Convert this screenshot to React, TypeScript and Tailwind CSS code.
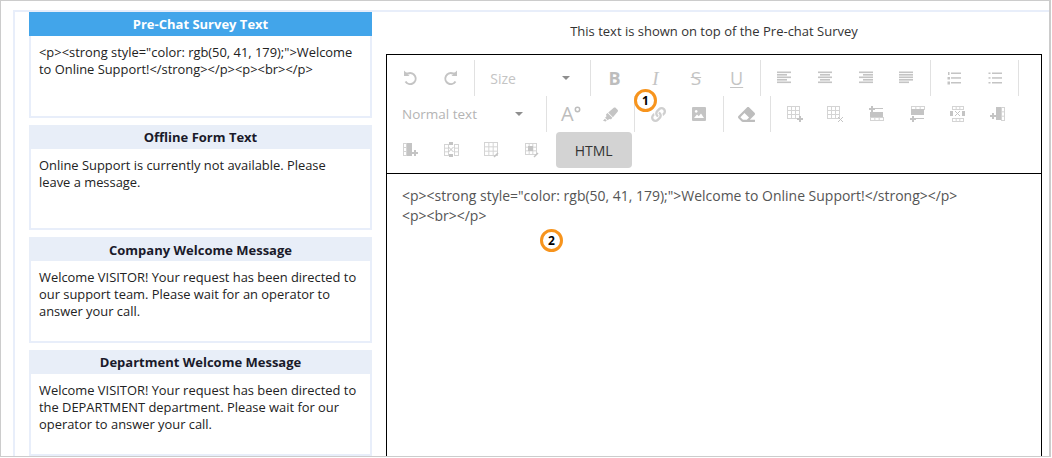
import { ReactNode } from 'react';
import { FaEraser, FaHighlighter, FaLink } from 'react-icons/fa';

const font = 'font-["Open_Sans","Liberation_Sans",sans-serif]';

function Ico({ children, w = 18, h = 18 }: { children: ReactNode; w?: number; h?: number }) {
  return (
    <svg width={w} height={h} viewBox={`0 0 ${w} ${h}`} fill="#c4c4c4">
      {children}
    </svg>
  );
}

function Bars({ rows }: { rows: [number, number][] }) {
  return (
    <Ico w={16} h={14}>
      {rows.map(([x, w], i) => (
        <rect key={i} x={x} y={i * 2.5 + 0.5} width={w} height={1.6} />
      ))}
    </Ico>
  );
}

function Grid({ x = 1, y = 1, w = 13, h = 13, cols = 3, rows = 3 }) {
  const lines = [];
  for (let i = 0; i <= cols; i++) lines.push(<rect key={'c' + i} fill="#d4d4d4" x={x + (i * w) / cols} y={y} width={1} height={h + 1} />);
  for (let i = 0; i <= rows; i++) lines.push(<rect key={'r' + i} fill="#d4d4d4" x={x} y={y + (i * h) / rows} width={w + 1} height={1} />);
  return <>{lines}</>;
}

const Plus = ({ x, y }: { x: number; y: number }) => (
  <path d={`M${x - 1} ${y - 3}h2v2h2v2h-2v2h-2v-2h-2v-2h2z`} />
);
const Cross = ({ x, y }: { x: number; y: number }) => (
  <path d={`M${x - 2.5} ${y - 2.5}l5 5M${x + 2.5} ${y - 2.5}l-5 5`} stroke="#c4c4c4" fill="none" />
);
const Pen = ({ x, y }: { x: number; y: number }) => (
  <path d={`M${x} ${y}l4-4`} stroke="#c4c4c4" strokeWidth="1.4" fill="none" />
);

const Btn = ({ children }: { children: ReactNode }) => (
  <div className="w-[40.67px] h-[36px] flex items-center justify-center shrink-0">{children}</div>
);
const Sep = () => <div className="mx-[3px] w-px h-[36px] bg-[#e1e1e1] shrink-0" />;
const Caret = () => <div className="w-0 h-0 border-x-[4px] border-x-transparent border-t-[4px] border-t-[#8e8e8e]" />;

const cards = [
  {
    title: 'Pre-Chat Survey Text',
    active: true,
    text: '<p><strong style="color: rgb(50, 41, 179);">Welcome to Online Support!</strong></p><p><br></p>',
  },
  { title: 'Offline Form Text', text: 'Online Support is currently not available. Please leave a message.' },
  {
    title: 'Company Welcome Message',
    text: 'Welcome VISITOR! Your request has been directed to our support team. Please wait for an operator to answer your call.',
  },
  {
    title: 'Department Welcome Message',
    text: 'Welcome VISITOR! Your request has been directed to the DEPARTMENT department. Please wait for our operator to answer your call.',
  },
];

function Card({ title, text, active }: { title: string; text: string; active?: boolean }) {
  return (
    <div className="w-[343px] h-[105.67px] shrink-0 flex flex-col">
      <div
        className={
          active
            ? 'h-[24px] pt-[2px] bg-[#42a5ea] text-white font-bold text-[13px] flex items-center justify-center'
            : 'h-[24px] pt-[2px] bg-[#e8eef8] text-[#1a1a2a] font-bold text-[13px] flex items-center justify-center'
        }
      >
        {title}
      </div>
      <div className="flex-1 border-2 border-t-0 border-[#e8eefa] pl-[8px] pr-[12px] pt-[8px] text-[12.9px] leading-[17px] text-[#222]">
        {text}
      </div>
    </div>
  );
}

export default function App() {
  return (
    <div className={`relative w-[1052px] h-[458px] bg-white overflow-hidden ${font}`}>
      <div className="w-[1051px] h-[457px] border border-[#cccccc] border-r-2 pl-[12px] pt-[9px] overflow-hidden">
        <div className="h-[460px] border-l-2 border-t-2 border-[#e8eefa] pl-[14px] flex">
          <div className="w-[343px] flex flex-col gap-[7px] shrink-0">
            {cards.map((c) => (
              <Card key={c.title} title={c.title} text={c.text} active={c.active} />
            ))}
          </div>

          <div className="ml-[14px] w-[656px] flex flex-col">
            <div className="h-[42px] flex items-center justify-center text-[13px] text-[#333] pb-[2px]">
              This text is shown on top of the Pre-chat Survey
            </div>
            <div className="flex-1 border border-black border-b-0 flex flex-col">
              <div className="h-[119px] border-b border-black pl-[3px] pt-[5px] shrink-0">
                <div className="flex h-[36px]">
                  <Btn>
                    <svg width="18" height="18" viewBox="0 0 18 18" fill="none" stroke="#c4c4c4" strokeWidth="2">
                      <path d="M4.5 12.5A5.5 5.5 0 1 0 7 4.5H3" />
                      <path d="M3 1.5v5.5h5.5" fill="#c4c4c4" stroke="none" />
                    </svg>
                  </Btn>
                  <Btn>
                    <svg width="18" height="18" viewBox="0 0 18 18" fill="none" stroke="#c4c4c4" strokeWidth="2">
                      <path d="M13.5 12.5A5.5 5.5 0 1 1 11 4.5h4" />
                      <path d="M15 1.5v5.5H9.5" fill="#c4c4c4" stroke="none" />
                    </svg>
                  </Btn>
                  <Sep />
                  <div className="w-[109px] pl-[12px] pr-[17px] flex items-center justify-between text-[14px] text-[#c4c4c4]">
                    Size
                    <Caret />
                  </div>
                  <Sep />
                  <Btn><span className="text-[18px] font-bold text-[#bdbdbd] leading-none">B</span></Btn>
                  <Btn><span className="text-[19px] italic text-[#c4c4c4] leading-none font-['Liberation_Serif']">I</span></Btn>
                  <Btn><span className="text-[19px] text-[#c4c4c4] leading-none line-through">S</span></Btn>
                  <Btn><span className="text-[18px] text-[#c4c4c4] leading-none underline underline-offset-2">U</span></Btn>
                  <Sep />
                  <Btn><Bars rows={[[1, 14], [1, 10], [1, 14], [1, 10], [1, 14]]} /></Btn>
                  <Btn><Bars rows={[[1, 14], [3, 10], [1, 14], [3, 10], [1, 14]]} /></Btn>
                  <Btn><Bars rows={[[1, 14], [5, 10], [1, 14], [5, 10], [1, 14]]} /></Btn>
                  <Btn><Bars rows={[[1, 14], [1, 14], [1, 14], [1, 14], [1, 10]]} /></Btn>
                  <Sep />
                  <Btn>
                    <Ico w={14} h={14}>
                      <rect x="4" y="1.5" width="10" height="1.5" />
                      <rect x="4" y="6.2" width="10" height="1.5" />
                      <rect x="4" y="11" width="10" height="1.5" />
                      <rect x="1" y="1" width="1.5" height="3" />
                      <rect x="0.5" y="6" width="2.5" height="2.5" />
                      <rect x="0.5" y="10.5" width="2.5" height="3" />
                    </Ico>
                  </Btn>
                  <Btn>
                    <Ico w={14} h={14}>
                      <rect x="4" y="1.5" width="10" height="1.5" />
                      <rect x="4" y="6.2" width="10" height="1.5" />
                      <rect x="4" y="11" width="10" height="1.5" />
                      <rect x="0.5" y="1.5" width="2" height="1.5" />
                      <rect x="0.5" y="6.2" width="2" height="1.5" />
                      <rect x="0.5" y="11" width="2" height="1.5" />
                    </Ico>
                  </Btn>
                  <Sep />
                </div>

                <div className="flex h-[36px]">
                  <div className="w-[153px] pl-[12px] pr-[20px] flex items-center justify-between text-[13.5px] text-[#b4b4b4] shrink-0">
                    Normal text
                    <Caret />
                  </div>
                  <Sep />
                  <Btn>
                    <span className="relative -ml-[6px] text-[20px] text-[#bdbdbd] leading-none">
                      A
                      <svg className="absolute -right-[7px] top-[2px]" width="7" height="7" viewBox="0 0 7 7" fill="none" stroke="#bdbdbd" strokeWidth="1.5">
                        <circle cx="3.5" cy="3.5" r="2.2" />
                      </svg>
                    </span>
                  </Btn>
                  <Btn><FaHighlighter size={15} color="#c4c4c4" /></Btn>
                  <Sep />
                  <Btn><FaLink size={15} color="#cfcfcf" /></Btn>
                  <Btn>
                    <Ico w={14} h={14}>
                      <path fillRule="evenodd" d="M1 0h12a1 1 0 0 1 1 1v12a1 1 0 0 1-1 1H1a1 1 0 0 1-1-1V1a1 1 0 0 1 1-1zM2 11h10L9 6.5 6.8 9.2 5 7.5zM4.2 3a1.4 1.4 0 1 0 .01 0z" />
                    </Ico>
                  </Btn>
                  <Sep />
                  <Btn><FaEraser size={17} color="#bdbdbd" /></Btn>
                  <Sep />
                  <Btn><Ico><Grid x={1} y={1} w={12} h={12} /><Plus x={14} y={14} /></Ico></Btn>
                  <Btn><Ico><Grid x={1} y={1} w={12} h={12} /><Cross x={14.5} y={14.5} /></Ico></Btn>
                  <Btn>
                    <Ico>
                      <Plus x={5} y={4} />
                      <rect x="8" y="3" width="8" height="1" />
                      <rect x="3" y="7" width="13" height="5" />
                      <Grid x={3} y={12} w={13} h={3} rows={1} cols={3} />
                    </Ico>
                  </Btn>
                  <Btn>
                    <Ico>
                      <Grid x={3} y={1} w={13} h={3} rows={1} cols={3} />
                      <rect x="3" y="4" width="13" height="6" />
                      <rect x="8" y="13" width="8" height="1" />
                      <Plus x={5} y={14} />
                    </Ico>
                  </Btn>
                  <Btn>
                    <Ico>
                      <Grid x={4} y={1} w={11} h={3} rows={1} cols={3} />
                      <Grid x={4} y={13} w={11} h={3} rows={1} cols={3} />
                      <rect x="2" y="6" width="3" height="5" />
                      <rect x="14" y="6" width="3" height="5" />
                      <Cross x={9.5} y={8.5} />
                    </Ico>
                  </Btn>
                  <Btn>
                    <Ico>
                      <Plus x={4} y={11} />
                      <rect x="7" y="2" width="5" height="13" />
                      <Grid x={12} y={2} w={3} h={13} cols={1} rows={3} />
                    </Ico>
                  </Btn>
                </div>

                <div className="flex h-[36px]">
                  <Btn>
                    <Ico>
                      <Grid x={2} y={2} w={3} h={12} cols={1} rows={3} />
                      <rect x="6" y="2" width="5" height="13" />
                      <Plus x={14} y={12} />
                    </Ico>
                  </Btn>
                  <Btn>
                    <Ico>
                      <Grid x={2} y={3} w={4} h={11} cols={1} rows={3} />
                      <Grid x={12} y={3} w={4} h={11} cols={1} rows={3} />
                      <rect x="7" y="1" width="4" height="3" />
                      <rect x="7" y="13" width="4" height="3" />
                      <Cross x={9} y={8.5} />
                    </Ico>
                  </Btn>
                  <Btn><Ico><Grid x={1} y={1} w={13} h={13} /><Pen x={11} y={16} /></Ico></Btn>
                  <Btn>
                    <Ico>
                      <Grid x={2} y={2} w={11} h={11} />
                      <rect x="5" y="5" width="5" height="5" />
                      <Pen x={11} y={16} />
                    </Ico>
                  </Btn>
                  <button className="ml-[3px] w-[76px] h-[36px] rounded-[4px] bg-[#d3d3d3] text-[14px] text-[#333] font-['Open_Sans']">
                    HTML
                  </button>
                </div>
              </div>
              <div className="flex-1 px-[15px] pt-[12px] text-[13.97px] leading-[20px] text-[#555]">
                <p>{'<p><strong style="color: rgb(50, 41, 179);">Welcome to Online Support!</strong></p>'}</p>
                <p>{'<p><br></p>'}</p>
              </div>
            </div>
          </div>
        </div>
      </div>

      <div className="absolute left-[634px] top-[89px] w-[23px] h-[23px] rounded-full border-[3px] border-[#f7941d] bg-white flex items-center justify-center text-[12px] font-bold text-black">
        1
      </div>
      <div className="absolute left-[540px] top-[229px] w-[23px] h-[23px] rounded-full border-[3px] border-[#f7941d] bg-white flex items-center justify-center text-[12px] font-bold text-black">
        2
      </div>
    </div>
  );
}
